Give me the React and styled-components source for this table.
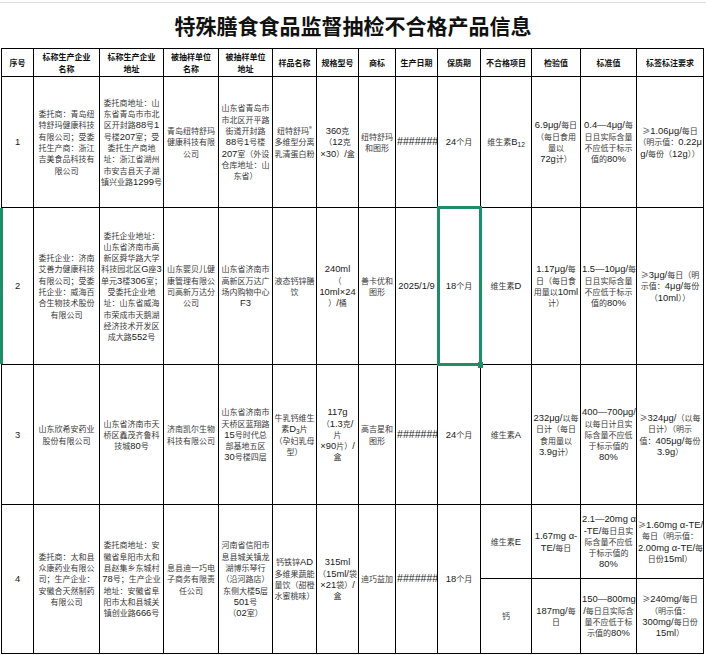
import React from "react";
import styled, { createGlobalStyle, css } from "styled-components";

const GlobalStyle = createGlobalStyle`
  html, body {
    margin: 0;
    padding: 0;
    background: #fff;
  }
  body {
    font-family: "Noto Sans CJK SC", "Liberation Sans", sans-serif;
  }
`;

const GREEN = "#1e8e66";

const Sheet = styled.div`
  width: 706px;
  height: 655px;
  overflow: hidden;
  background: #fff;
`;

const TitleBar = styled.div`
  margin-top: 2px;
  height: 45px;
  border-top: 1px solid #dedede;
  display: flex;
  align-items: center;
  justify-content: center;
  font: 700 21px/1 "Noto Sans CJK SC", sans-serif;
  color: #111;
`;

const Grid = styled.table`
  margin-left: 1px;
  width: 702px;
  table-layout: fixed;
  border-collapse: collapse;
`;

const HeadCell = styled.th`
  height: 27px;
  border: 1px solid #000;
  padding: 0 1px;
  font: 700 8px/11.5px "Noto Sans CJK SC", sans-serif;
  color: #111;
  text-align: center;
  vertical-align: middle;
  white-space: nowrap;
`;

const Cell = styled.td`
  border: 1px solid #000;
  padding: 0 1px;
  height: ${(p) => p.$h}px;
  font: 400 8px/11.3px "Noto Sans CJK SC", sans-serif;
  color: #3a3a3a;
  text-align: center;
  vertical-align: middle;
  white-space: nowrap;
  overflow: hidden;

  ${(p) =>
    p.$rowMark &&
    css`
      position: relative;
      overflow: visible;
      &::before {
        content: "";
        position: absolute;
        left: -2px;
        top: 0;
        bottom: 0;
        width: 2.5px;
        background: ${GREEN};
      }
    `}

  ${(p) =>
    p.$selected &&
    css`
      position: relative;
      overflow: visible;
      &::after {
        content: "";
        position: absolute;
        top: -2.5px;
        left: -1.5px;
        right: -1.5px;
        bottom: -1.5px;
        border: 3px solid ${GREEN};
        pointer-events: none;
        z-index: 1;
      }
      &::before {
        content: "";
        position: absolute;
        right: -3px;
        bottom: -3.5px;
        width: 5.5px;
        height: 5.5px;
        background: ${GREEN};
        z-index: 2;
      }
    `}
`;

const Line = styled.span`
  display: block;
`;

const Lat = styled.span`
  font-family: "Liberation Sans", sans-serif;
  font-size: 9.4px;
  color: #1a1a1a;
`;

const Hash = styled.span`
  font-family: "Liberation Sans", sans-serif;
  font-size: 10.6px;
  color: #1a1a1a;
`;

const Sub = styled.sub`
  font-size: 6.5px;
  vertical-align: -2px;
  line-height: 0;
`;

const Sup = styled.sup`
  font-size: 6px;
  vertical-align: 3px;
  line-height: 0;
`;

const LATIN = /([0-9A-Za-z.\/\-—×μα %]+)/;

function mix(text) {
  if (typeof text !== "string") return text;
  if (/^#+$/.test(text)) return <Hash>{text}</Hash>;
  return text
    .split(LATIN)
    .map((part, i) => (i % 2 ? <Lat key={i}>{part}</Lat> : part));
}

const widths = [32, 66, 64, 55, 54, 44, 42, 37, 42, 43, 51, 49, 56, 67];

const headers = [
  ["序号"],
  ["标称生产企业", "名称"],
  ["标称生产企业", "地址"],
  ["被抽样单位", "名称"],
  ["被抽样单位", "地址"],
  ["样品名称"],
  ["规格型号"],
  ["商标"],
  ["生产日期"],
  ["保质期"],
  ["不合格项目"],
  ["检验值"],
  ["标准值"],
  ["标签标注要求"],
];

const rows = [
  {
    h: 130,
    cells: [
      ["1"],
      ["委托商：青岛纽", "特舒玛健康科技", "有限公司；受委", "托生产商：浙江", "吉美食品科技有", "限公司"],
      ["委托商地址：山", "东省青岛市市北", "区开封路88号1", "号楼207室；受", "委托生产商地", "址：浙江省湖州", "市安吉县天子湖", "镇兴业路1299号"],
      ["青岛纽特舒玛", "健康科技有限", "公司"],
      ["山东省青岛市", "市北区开平路", "街道开封路", "88号1号楼", "207室（外设", "仓库地址：山", "东省）"],
      [<>纽特舒玛<Sup>®</Sup></>, "多维型分离", "乳清蛋白粉"],
      ["360克", "（12克", "×30）/盒"],
      ["纽特舒玛", "和图形"],
      ["#######"],
      ["24个月"],
    ],
    tests: [
      [
        [<>维生素<Lat>B<Sub>12</Sub></Lat></>],
        ["6.9μg/每日", "（每日食用", "量以", "72g计）"],
        ["0.4—4μg/每", "日且实际含量", "不应低于标示", "值的80%"],
        ["≥1.06μg/每日", "（明示值：0.22μ", "g/每份（12g））"],
      ],
    ],
  },
  {
    h: 156,
    mark: true,
    cells: [
      ["2"],
      ["委托企业：济南", "艾善力健康科技", "有限公司；受委", "托企业：威海百", "合生物技术股份", "有限公司"],
      ["委托企业地址：", "山东省济南市高", "新区舜华路大学", "科技园北区G座3", "单元3楼306室；", "受委托企业地", "址：山东省威海", "市荣成市天鹅湖", "经济技术开发区", "成大路552号"],
      ["山东婴贝儿健", "康管理有限公", "司高新万达分", "公司"],
      ["山东省济南市", "高新区万达广", "场内购物中心", "F3"],
      ["液态钙锌膳", "饮"],
      ["240ml", "（", "10ml×24", "）/桶"],
      ["善卡优和", "图形"],
      ["2025/1/9"],
      ["18个月"],
    ],
    tests: [
      [
        ["维生素D"],
        ["1.17μg/每", "日（每日食", "用量以10ml", "计）"],
        ["1.5—10μg/每", "日且实际含量", "不应低于标示", "值的80%"],
        ["≥3μg/每日（明", "示值：4μg/每份", "（10ml））"],
      ],
    ],
  },
  {
    h: 139,
    cells: [
      ["3"],
      ["山东欣希安药业", "股份有限公司"],
      ["山东省济南市天", "桥区鑫茂齐鲁科", "技城80号"],
      ["济南凯尔生物", "科技有限公司"],
      ["山东省济南市", "天桥区蓝翔路", "15号时代总", "部基地五区", "30号楼四层"],
      ["牛乳钙维生", <>素<Lat>D<Sub>3</Sub></Lat>片</>, "（孕妇乳母", "型）"],
      ["117g", "（1.3克/", "片", "×90片）/", "盒"],
      ["高吉星和", "图形"],
      ["#######"],
      ["24个月"],
    ],
    tests: [
      [
        ["维生素A"],
        ["232μg/以每", "日计（每日", "食用量以", "3.9g计）"],
        ["400—700μg/", "以每日计且实", "际含量不应低", "于标示值的", "80%"],
        ["≥324μg/（以每", "日计）（明示", "值：405μg/每份", "3.9g）"],
      ],
    ],
  },
  {
    h: 73,
    h2: 74,
    cells: [
      ["4"],
      ["委托商：太和县", "众康药业有限公", "司；生产企业：", "安徽合天然制药", "有限公司"],
      ["委托商地址：安", "徽省阜阳市太和", "县赵集乡东城村", "78号；生产企业", "地址：安徽省阜", "阳市太和县城关", "镇创业路666号"],
      ["息县迪一巧电", "子商务有限责", "任公司"],
      ["河南省信阳市", "息县城关镇龙", "湖博乐琴行", "（沿河路店）", "东侧大楼5层", "501号", "（02室）"],
      ["钙铁锌AD", "多维果蔬能", "量饮（甜橙", "水蜜桃味）"],
      ["315ml", "（15ml/袋", "×21袋）/", "盒"],
      ["迪巧益加"],
      ["#######"],
      ["18个月"],
    ],
    tests: [
      [
        ["维生素E"],
        ["1.67mg α-", "TE/每日"],
        ["2.1—20mg α", "-TE/每日且实", "际含量不应低", "于标示值的", "80%"],
        ["≥1.60mg α-TE/", "每日（明示值：", "2.00mg α-TE/每", "日份15ml）"],
      ],
      [
        ["钙"],
        ["187mg/每", "日"],
        ["150—800mg", "/每日且实际含", "量不应低于标", "示值的80%"],
        ["≥240mg/每日", "（明示值：", "300mg/每日份", "15ml）"],
      ],
    ],
  },
];

function Lines({ lines }) {
  return lines.map((l, i) => <Line key={i}>{mix(l)}</Line>);
}

function DataRows({ row }) {
  const span = row.tests.length;
  return (
    <>
      <tr>
        {row.cells.map((lines, i) => (
          <Cell
            key={i}
            rowSpan={span}
            $h={row.h}
            $rowMark={row.mark && i === 0}
            $selected={row.mark && i === 9}
          >
            <Lines lines={lines} />
          </Cell>
        ))}
        {row.tests[0].map((lines, i) => (
          <Cell key={"t" + i} $h={row.h}>
            <Lines lines={lines} />
          </Cell>
        ))}
      </tr>
      {row.tests.slice(1).map((test, k) => (
        <tr key={k}>
          {test.map((lines, i) => (
            <Cell key={i} $h={row.h2}>
              <Lines lines={lines} />
            </Cell>
          ))}
        </tr>
      ))}
    </>
  );
}

export default function App() {
  return (
    <Sheet>
      <GlobalStyle />
      <TitleBar>特殊膳食食品监督抽检不合格产品信息</TitleBar>
      <Grid>
        <colgroup>
          {widths.map((w, i) => (
            <col key={i} style={{ width: w }} />
          ))}
        </colgroup>
        <thead>
          <tr>
            {headers.map((h, i) => (
              <HeadCell key={i}>
                <Lines lines={h} />
              </HeadCell>
            ))}
          </tr>
        </thead>
        <tbody>
          {rows.map((row, i) => (
            <DataRows key={i} row={row} />
          ))}
        </tbody>
      </Grid>
    </Sheet>
  );
}
